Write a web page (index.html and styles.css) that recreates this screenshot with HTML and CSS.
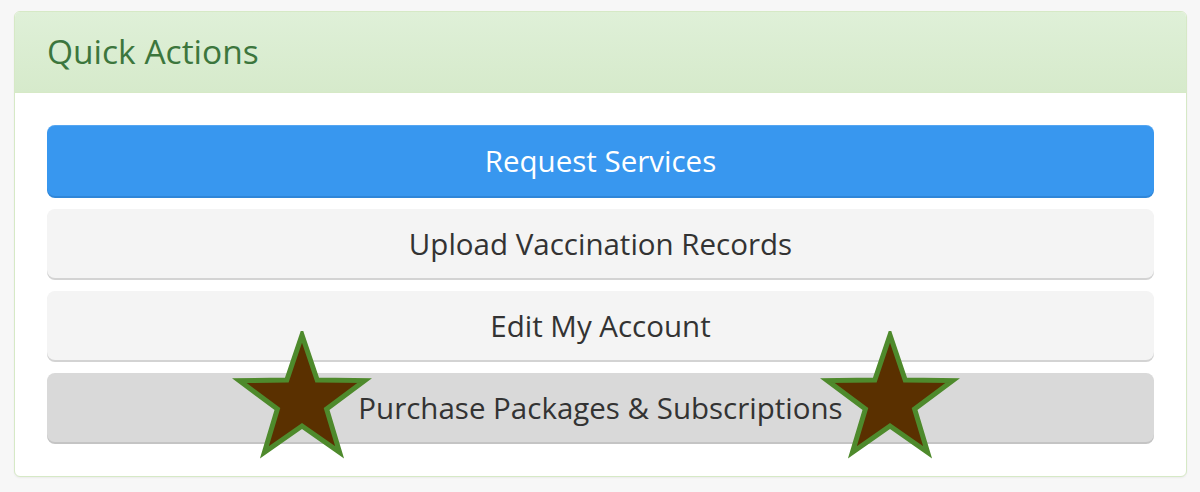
FILE: index.html
```html
<!DOCTYPE html>
<html>
<head>
<meta charset="utf-8">
<link rel="stylesheet" href="styles.css">
</head>
<body>
<div class="panel">
  <div class="panel-heading">Quick Actions</div>
  <div class="panel-body">
    <div class="btn btn-primary">Request Services</div>
    <div class="btn btn-light">Upload Vaccination Records</div>
    <div class="btn btn-light">Edit My Account</div>
    <div class="btn btn-gray">Purchase Packages &amp; Subscriptions</div>
  </div>
</div>
<svg class="star star-left" width="140" height="140" viewBox="-70 -70 140 140">
  <polygon points="0,-66 15.2,-21 62.8,-20.4 24.6,8 37.6,51.4 0,25 -37.6,51.4 -24.6,8 -62.8,-20.4 -15.2,-21" />
</svg>
<svg class="star star-right" width="140" height="140" viewBox="-70 -70 140 140">
  <polygon points="0,-66 15.2,-21 62.8,-20.4 24.6,8 37.6,51.4 0,25 -37.6,51.4 -24.6,8 -62.8,-20.4 -15.2,-21" />
</svg>
</body>
</html>
```
FILE: styles.css
```css
html, body {
  margin: 0;
  padding: 0;
}
body {
  background: #f7f7f7;
  font-family: "Open Sans", "Noto Sans", sans-serif;
  padding: 11px 13px 14px 14px;
  position: relative;
  height: 492px;
  box-sizing: border-box;
}
.panel {
  background: #fff;
  border: 1px solid #d6e9c6;
  border-radius: 6px;
  box-shadow: 0 1px 2px rgba(0,0,0,0.05);
  overflow: hidden;
}
.panel-heading {
  height: 81px;
  box-sizing: border-box;
  border-bottom: 1px solid #d6e9c6;
  background: linear-gradient(to bottom, #dff0d8 0%, #d6eacb 100%);
  color: #3c763d;
  font-size: 33.5px;
  line-height: 78px;
  padding-left: 32px;
}
.panel-body {
  padding: 32px 32px 34px 32px;
  display: flex;
  flex-direction: column;
  gap: 13px;
}
.btn {
  height: 69px;
  border-radius: 8px;
  display: flex;
  align-items: center;
  justify-content: center;
  font-size: 29.5px;
  color: #333;
}
.btn-primary {
  background: #3897ef;
  color: #fff;
  box-shadow: inset 0 1px 0 rgba(255,255,255,0.15), 0 2px 0 #2f86d8;
  height: 71px;
}
.btn-light {
  background: #f4f4f4;
  box-shadow: 0 2px 0 #d3d3d3;
}
.btn-gray {
  background: #d9d9d9;
  box-shadow: 0 2px 0 #c4c4c4;
}
.star {
  position: absolute;
}
.star polygon {
  fill: #5a3000;
  stroke: #4e8a2c;
  stroke-width: 5;
  stroke-linejoin: miter;
}
.star-left {
  left: 232px;
  top: 331px;
}
.star-right {
  left: 820px;
  top: 331px;
}
```
